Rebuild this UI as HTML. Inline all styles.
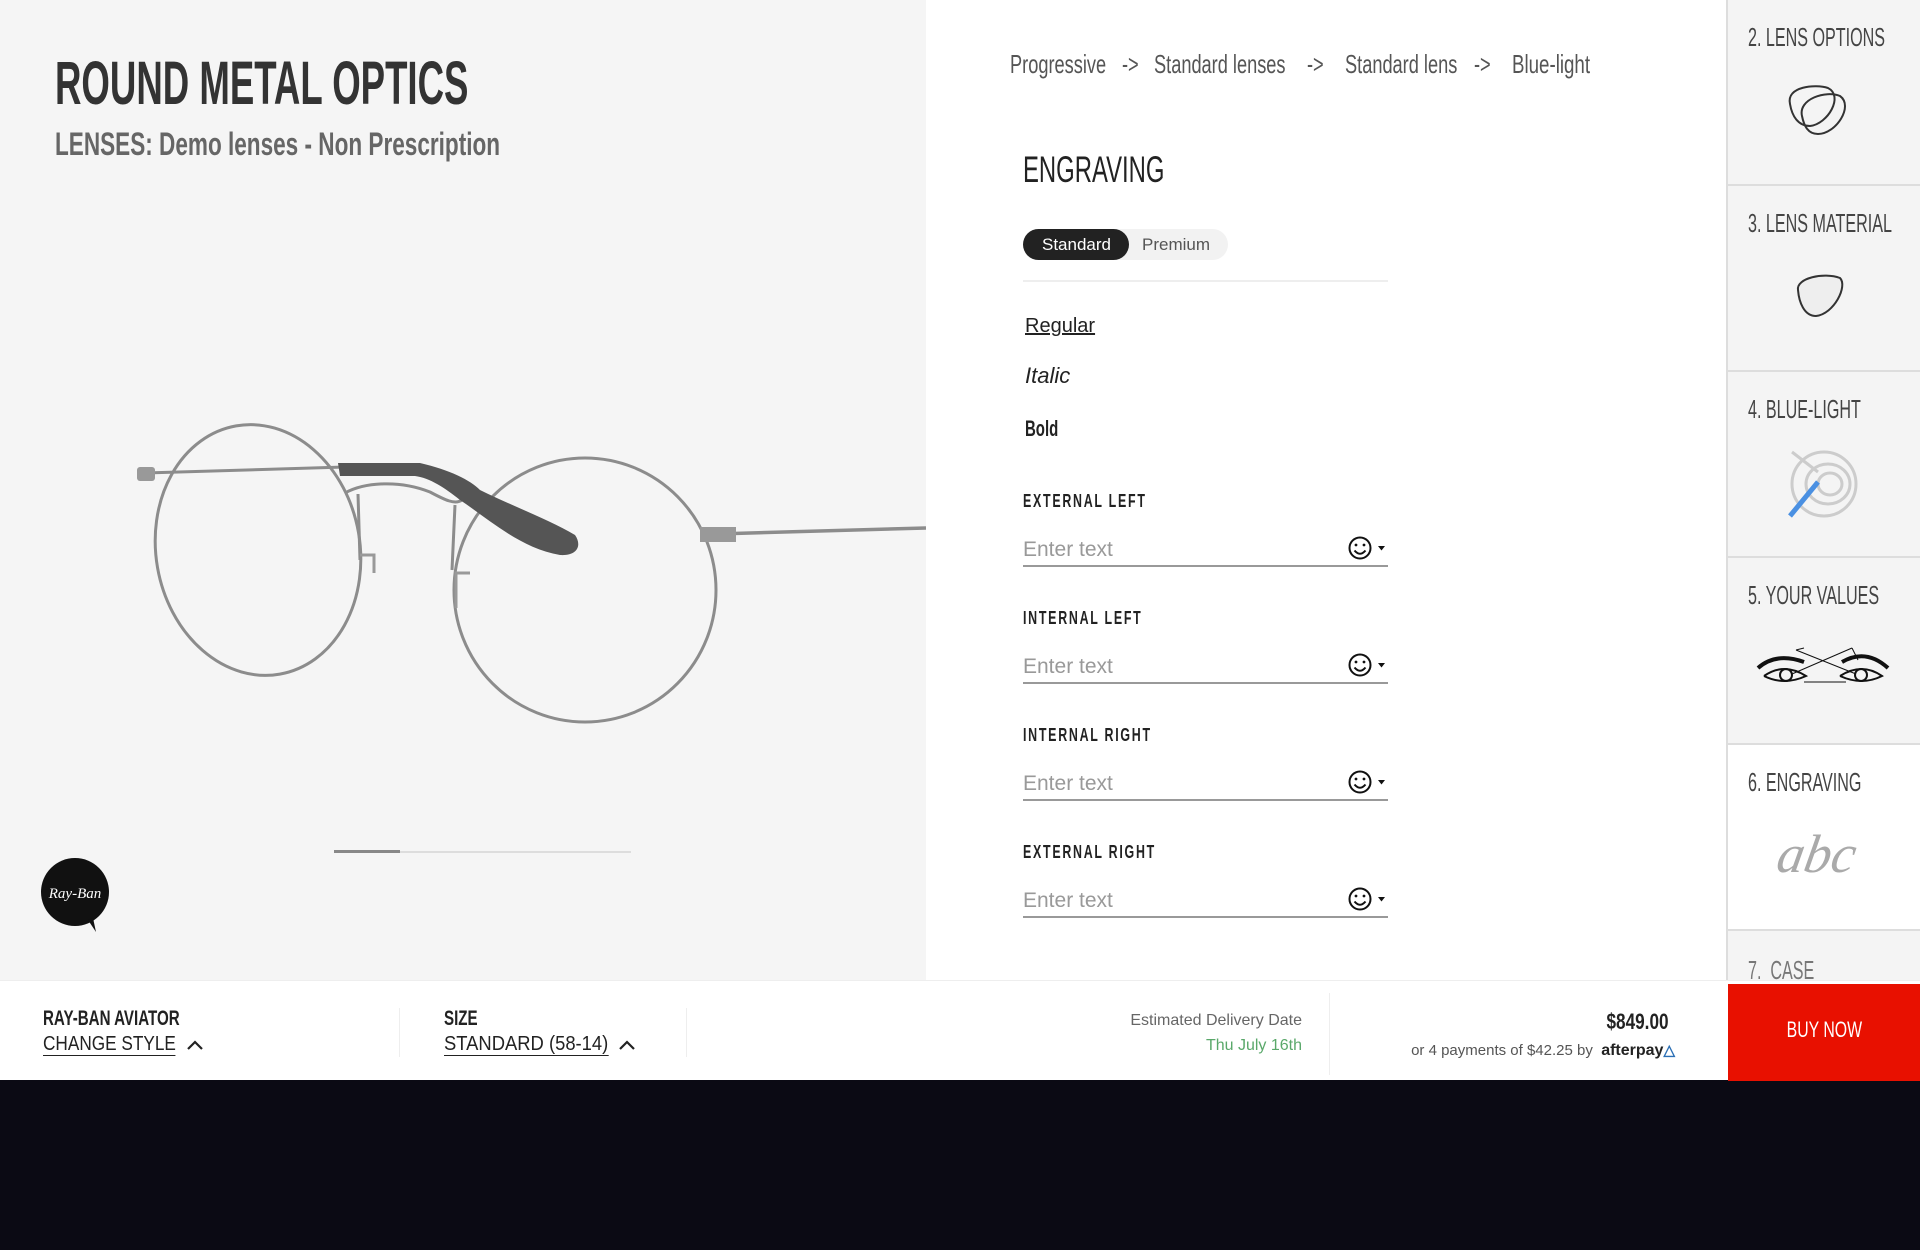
<!DOCTYPE html>
<html><head><meta charset="utf-8">
<style>
*{margin:0;padding:0;box-sizing:border-box}
body{width:1920px;height:1250px;position:relative;overflow:hidden;background:#0b0a14;font-family:"Liberation Sans",sans-serif}
.a{position:absolute;white-space:nowrap}
.c{transform-origin:left center;display:inline-block}
.left{position:absolute;left:0;top:0;width:926px;height:980px;background:#f5f5f5}
.mid{position:absolute;left:926px;top:0;width:802px;height:980px;background:#fff}
.side{position:absolute;left:1726px;top:0;width:194px;height:983px;background:#f4f4f4;border-left:2px solid #ddd;overflow:hidden}
.item{position:absolute;left:0;width:192px;height:186px;border-bottom:2px solid #ddd}
.item .t{position:absolute;left:20px;top:22px;font-size:26px;color:#444;transform:scaleX(.62);transform-origin:left;white-space:nowrap}
.bar{position:absolute;left:0;top:980px;width:1920px;height:100px;background:#fff;border-top:1px solid #eee}
.lbl{font-size:18px;font-weight:bold;letter-spacing:2.5px;color:#222}
.inp{position:absolute;left:1023px;width:365px;height:2px;background:#999}
.ph{font-size:21px;color:#999;font-weight:300}
.ul{border-bottom:1.5px solid #222;line-height:22px}
</style></head><body>
<div class="left"></div>
<div class="mid"></div>

<div class="a" style="left:55px;top:48px;font-size:61px;font-weight:bold;color:#333;line-height:70px"><span class="c" style="transform:scaleX(.60)">ROUND METAL OPTICS</span></div>
<div class="a" style="left:55px;top:124px;font-size:32px;font-weight:bold;color:#666;line-height:40px"><span class="c" style="transform:scaleX(.705)">LENSES: Demo lenses - Non Prescription</span></div>

<svg class="a" style="left:0;top:380px" width="926" height="360" viewBox="0 380 926 360">
 <g fill="none" stroke="#8c8c8c" stroke-width="3">
  <path d="M145 473 L345 467"/>
  <ellipse cx="258" cy="550" rx="102" ry="126" transform="rotate(-10 258 550)"/>
  <ellipse cx="585" cy="590" rx="131" ry="132"/>
  <path d="M345 493 C365 482 400 480 430 492 C445 500 455 505 462 500"/>
  <path d="M716 534 L926 528" stroke-width="3.5"/>
  <path d="M358 494 L360 560 M455 505 L452 570"/>
 </g>
 <path d="M338 463 L420 463 C450 470 470 480 480 490 C510 505 550 520 575 535 C582 545 578 556 560 555 C520 548 490 520 460 500 C445 488 430 478 415 476 L340 476 Z" fill="#555"/>
 <rect x="137" y="467" width="18" height="14" rx="3" fill="#999"/>
 <rect x="700" y="527" width="36" height="15" fill="#999"/>
 <path d="M360 555 l14 0 0 18 M470 573 l-14 0 0 35" stroke="#999" stroke-width="3" fill="none"/>
</svg>

<div class="a" style="left:334px;top:851px;width:297px;height:2px;background:#ddd"></div>
<div class="a" style="left:334px;top:850px;width:66px;height:3px;background:#888"></div>

<svg class="a" style="left:38px;top:854px" width="80" height="80" viewBox="0 0 80 80">
 <circle cx="37" cy="38" r="34" fill="#111"/>
 <path d="M50 66 L58 78 L55 64 Z" fill="#111"/>
 <text x="37" y="44" font-family="Liberation Serif" font-style="italic" font-size="15" fill="#fff" text-anchor="middle">Ray-Ban</text>
</svg>

<div style="font-size:26px;color:#555;line-height:30px">
<div class="a" style="left:1010px;top:49px"><span class="c" style="transform:scaleX(.7)">Progressive</span></div>
<div class="a" style="left:1122px;top:49px"><span class="c" style="transform:scaleX(.7)">-&gt;</span></div>
<div class="a" style="left:1154px;top:49px"><span class="c" style="transform:scaleX(.7)">Standard lenses</span></div>
<div class="a" style="left:1307px;top:49px"><span class="c" style="transform:scaleX(.7)">-&gt;</span></div>
<div class="a" style="left:1345px;top:49px"><span class="c" style="transform:scaleX(.7)">Standard lens</span></div>
<div class="a" style="left:1474px;top:49px"><span class="c" style="transform:scaleX(.7)">-&gt;</span></div>
<div class="a" style="left:1512px;top:49px"><span class="c" style="transform:scaleX(.72)">Blue-light</span></div>
</div>

<div class="a" style="left:1023px;top:150px;font-size:37px;color:#222;line-height:40px"><span class="c" style="transform:scaleX(.645)">ENGRAVING</span></div>

<div class="a" style="left:1023px;top:229px;width:205px;height:31px;border-radius:16px;background:#f2f2f2"></div>
<div class="a" style="left:1023px;top:229px;width:106px;height:31px;border-radius:16px;background:#222"></div>
<div class="a" style="left:1042px;top:235px;font-size:17px;color:#fff">Standard</div>
<div class="a" style="left:1142px;top:235px;font-size:17px;color:#555">Premium</div>
<div class="a" style="left:1023px;top:280px;width:365px;height:2px;background:#eee"></div>

<div class="a" style="left:1025px;top:315px;font-size:20px;color:#222;text-decoration:underline">Regular</div>
<div class="a" style="left:1025px;top:363px;font-size:22px;color:#222;font-style:italic">Italic</div>
<div class="a" style="left:1025px;top:416px;font-size:22px;font-weight:bold;color:#222"><span class="c" style="transform:scaleX(.68)">Bold</span></div>

<div class="a lbl" style="left:1023px;top:491px"><span class="c" style="transform:scaleX(.69)">EXTERNAL LEFT</span></div>
<div class="a lbl" style="left:1023px;top:608px"><span class="c" style="transform:scaleX(.69)">INTERNAL LEFT</span></div>
<div class="a lbl" style="left:1023px;top:725px"><span class="c" style="transform:scaleX(.69)">INTERNAL RIGHT</span></div>
<div class="a lbl" style="left:1023px;top:842px"><span class="c" style="transform:scaleX(.69)">EXTERNAL RIGHT</span></div>

<div class="a ph" style="left:1023px;top:538px">Enter text</div>
<div class="a ph" style="left:1023px;top:655px">Enter text</div>
<div class="a ph" style="left:1023px;top:772px">Enter text</div>
<div class="a ph" style="left:1023px;top:889px">Enter text</div>
<div class="inp" style="top:565px"></div>
<div class="inp" style="top:682px"></div>
<div class="inp" style="top:799px"></div>
<div class="inp" style="top:916px"></div>

<svg class="a" style="left:1346px;top:0" width="44" height="920">
 <defs><g id="sm"><circle cx="14" cy="0" r="10.5" fill="none" stroke="#111" stroke-width="2"/><circle cx="10" cy="-3" r="1.4" fill="#111"/><circle cx="18" cy="-3" r="1.4" fill="#111"/><path d="M8.5 2.5 Q14 9 19.5 2.5" fill="none" stroke="#111" stroke-width="2"/><path d="M32 -2 L39 -2 L35.5 2.5Z" fill="#111"/></g></defs>
 <use href="#sm" y="548"/><use href="#sm" y="665"/><use href="#sm" y="782"/><use href="#sm" y="899"/>
</svg>

<div class="side">
 <div class="item" style="top:0"><div class="t">2. LENS OPTIONS</div>
  <svg style="position:absolute;left:58px;top:84px" width="66" height="58"><g fill="none" stroke="#333" stroke-width="2"><path d="M4 20 C0 2 30 0 42 4 C58 12 42 40 24 42 C12 42 6 32 4 20Z"/><path d="M16 32 C12 15 40 6 54 12 C68 22 50 50 32 50 C22 50 18 42 16 32Z"/></g></svg></div>
 <div class="item" style="top:186px"><div class="t">3. LENS MATERIAL</div>
  <svg style="position:absolute;left:66px;top:86px" width="54" height="50"><path d="M4 18 C2 6 30 0 46 6 C54 14 40 42 22 44 C10 44 5 30 4 18Z" fill="#eee" stroke="#333" stroke-width="2"/></svg></div>
 <div class="item" style="top:372px"><div class="t">4. BLUE-LIGHT</div>
  <svg style="position:absolute;left:54px;top:70px" width="80" height="80"><g fill="none" stroke="#ccc" stroke-width="3"><circle cx="42" cy="42" r="32"/><ellipse cx="46" cy="42" rx="22" ry="20"/><ellipse cx="48" cy="42" rx="12" ry="11"/><path d="M10 10 L36 30"/></g><path d="M8 74 L36 40" stroke="#4a90e2" stroke-width="5"/></svg></div>
 <div class="item" style="top:558px;height:187px"><div class="t">5. YOUR VALUES</div>
  <svg style="position:absolute;left:28px;top:82px" width="134" height="56"><g fill="none" stroke="#111" stroke-width="2"><path d="M2 28 Q20 12 48 22" stroke-width="4"/><path d="M86 22 Q110 8 132 28" stroke-width="4"/><path d="M8 36 Q28 22 50 36 Q28 46 8 36"/><path d="M84 36 Q106 22 126 36 Q106 46 84 36"/><circle cx="30" cy="35" r="6"/><circle cx="105" cy="35" r="6"/><path d="M40 10 L100 34 M36 34 L96 8 M40 10 L48 8 M96 8 L102 20 M48 42 L90 42" stroke-width="1"/></g></svg></div>
 <div class="item" style="top:745px;background:#fff"><div class="t">6. ENGRAVING</div>
  <div style="position:absolute;left:50px;top:78px;font-family:'Liberation Serif',serif;font-style:italic;font-size:54px;color:#aaa;transform:skewX(-10deg)">abc</div></div>
 <div class="item" style="top:931px"><div class="t" style="top:24px;color:#777">7.&nbsp; CASE</div></div>
</div>

<div class="bar">
 <div class="a" style="left:43px;top:26px;font-size:21px;font-weight:bold;color:#222"><span class="c" style="transform:scaleX(.72)">RAY-BAN AVIATOR</span></div>
 <div class="a" style="left:43px;top:52px;font-size:20px;color:#222"><span class="c ul" style="transform:scaleX(.86)">CHANGE STYLE</span></div>
 <svg class="a" style="left:186px;top:58px" width="18" height="12"><path d="M2 10 L9 3 L16 10" fill="none" stroke="#222" stroke-width="2.2"/></svg>
 <div class="a" style="left:399px;top:27px;width:1px;height:49px;background:#eee"></div>
 <div class="a" style="left:444px;top:26px;font-size:21px;font-weight:bold;color:#222"><span class="c" style="transform:scaleX(.72)">SIZE</span></div>
 <div class="a" style="left:444px;top:52px;font-size:20px;color:#222"><span class="c ul" style="transform:scaleX(.92)">STANDARD (58-14)</span></div>
 <svg class="a" style="left:618px;top:58px" width="18" height="12"><path d="M2 10 L9 3 L16 10" fill="none" stroke="#222" stroke-width="2.2"/></svg>
 <div class="a" style="left:686px;top:27px;width:1px;height:49px;background:#eee"></div>
 <div class="a" style="right:618px;top:31px;font-size:16px;color:#666">Estimated Delivery Date</div>
 <div class="a" style="right:618px;top:56px;font-size:16px;color:#5aa86a">Thu July 16th</div>
 <div class="a" style="left:1329px;top:12px;width:1px;height:82px;background:#eee"></div>
 <div class="a" style="right:251px;top:28px;font-size:22px;font-weight:bold;color:#222"><span class="c" style="transform:scaleX(.78);transform-origin:right">$849.00</span></div>
 <div class="a" style="right:245px;top:60px;font-size:15px;color:#555">or 4 payments of $42.25 by &nbsp;<b style="color:#222;font-size:16px">afterpay</b><b style="color:#2b6fb5;font-size:15px">&#9651;</b></div>
 <div class="a" style="left:1728px;top:3px;width:192px;height:97px;background:#e81000"></div>
 <div class="a" style="left:1728px;top:36px;width:192px;text-align:center;font-size:22px;color:#fff"><span class="c" style="transform:scaleX(.72);transform-origin:center">BUY NOW</span></div>
</div>
</body></html>
